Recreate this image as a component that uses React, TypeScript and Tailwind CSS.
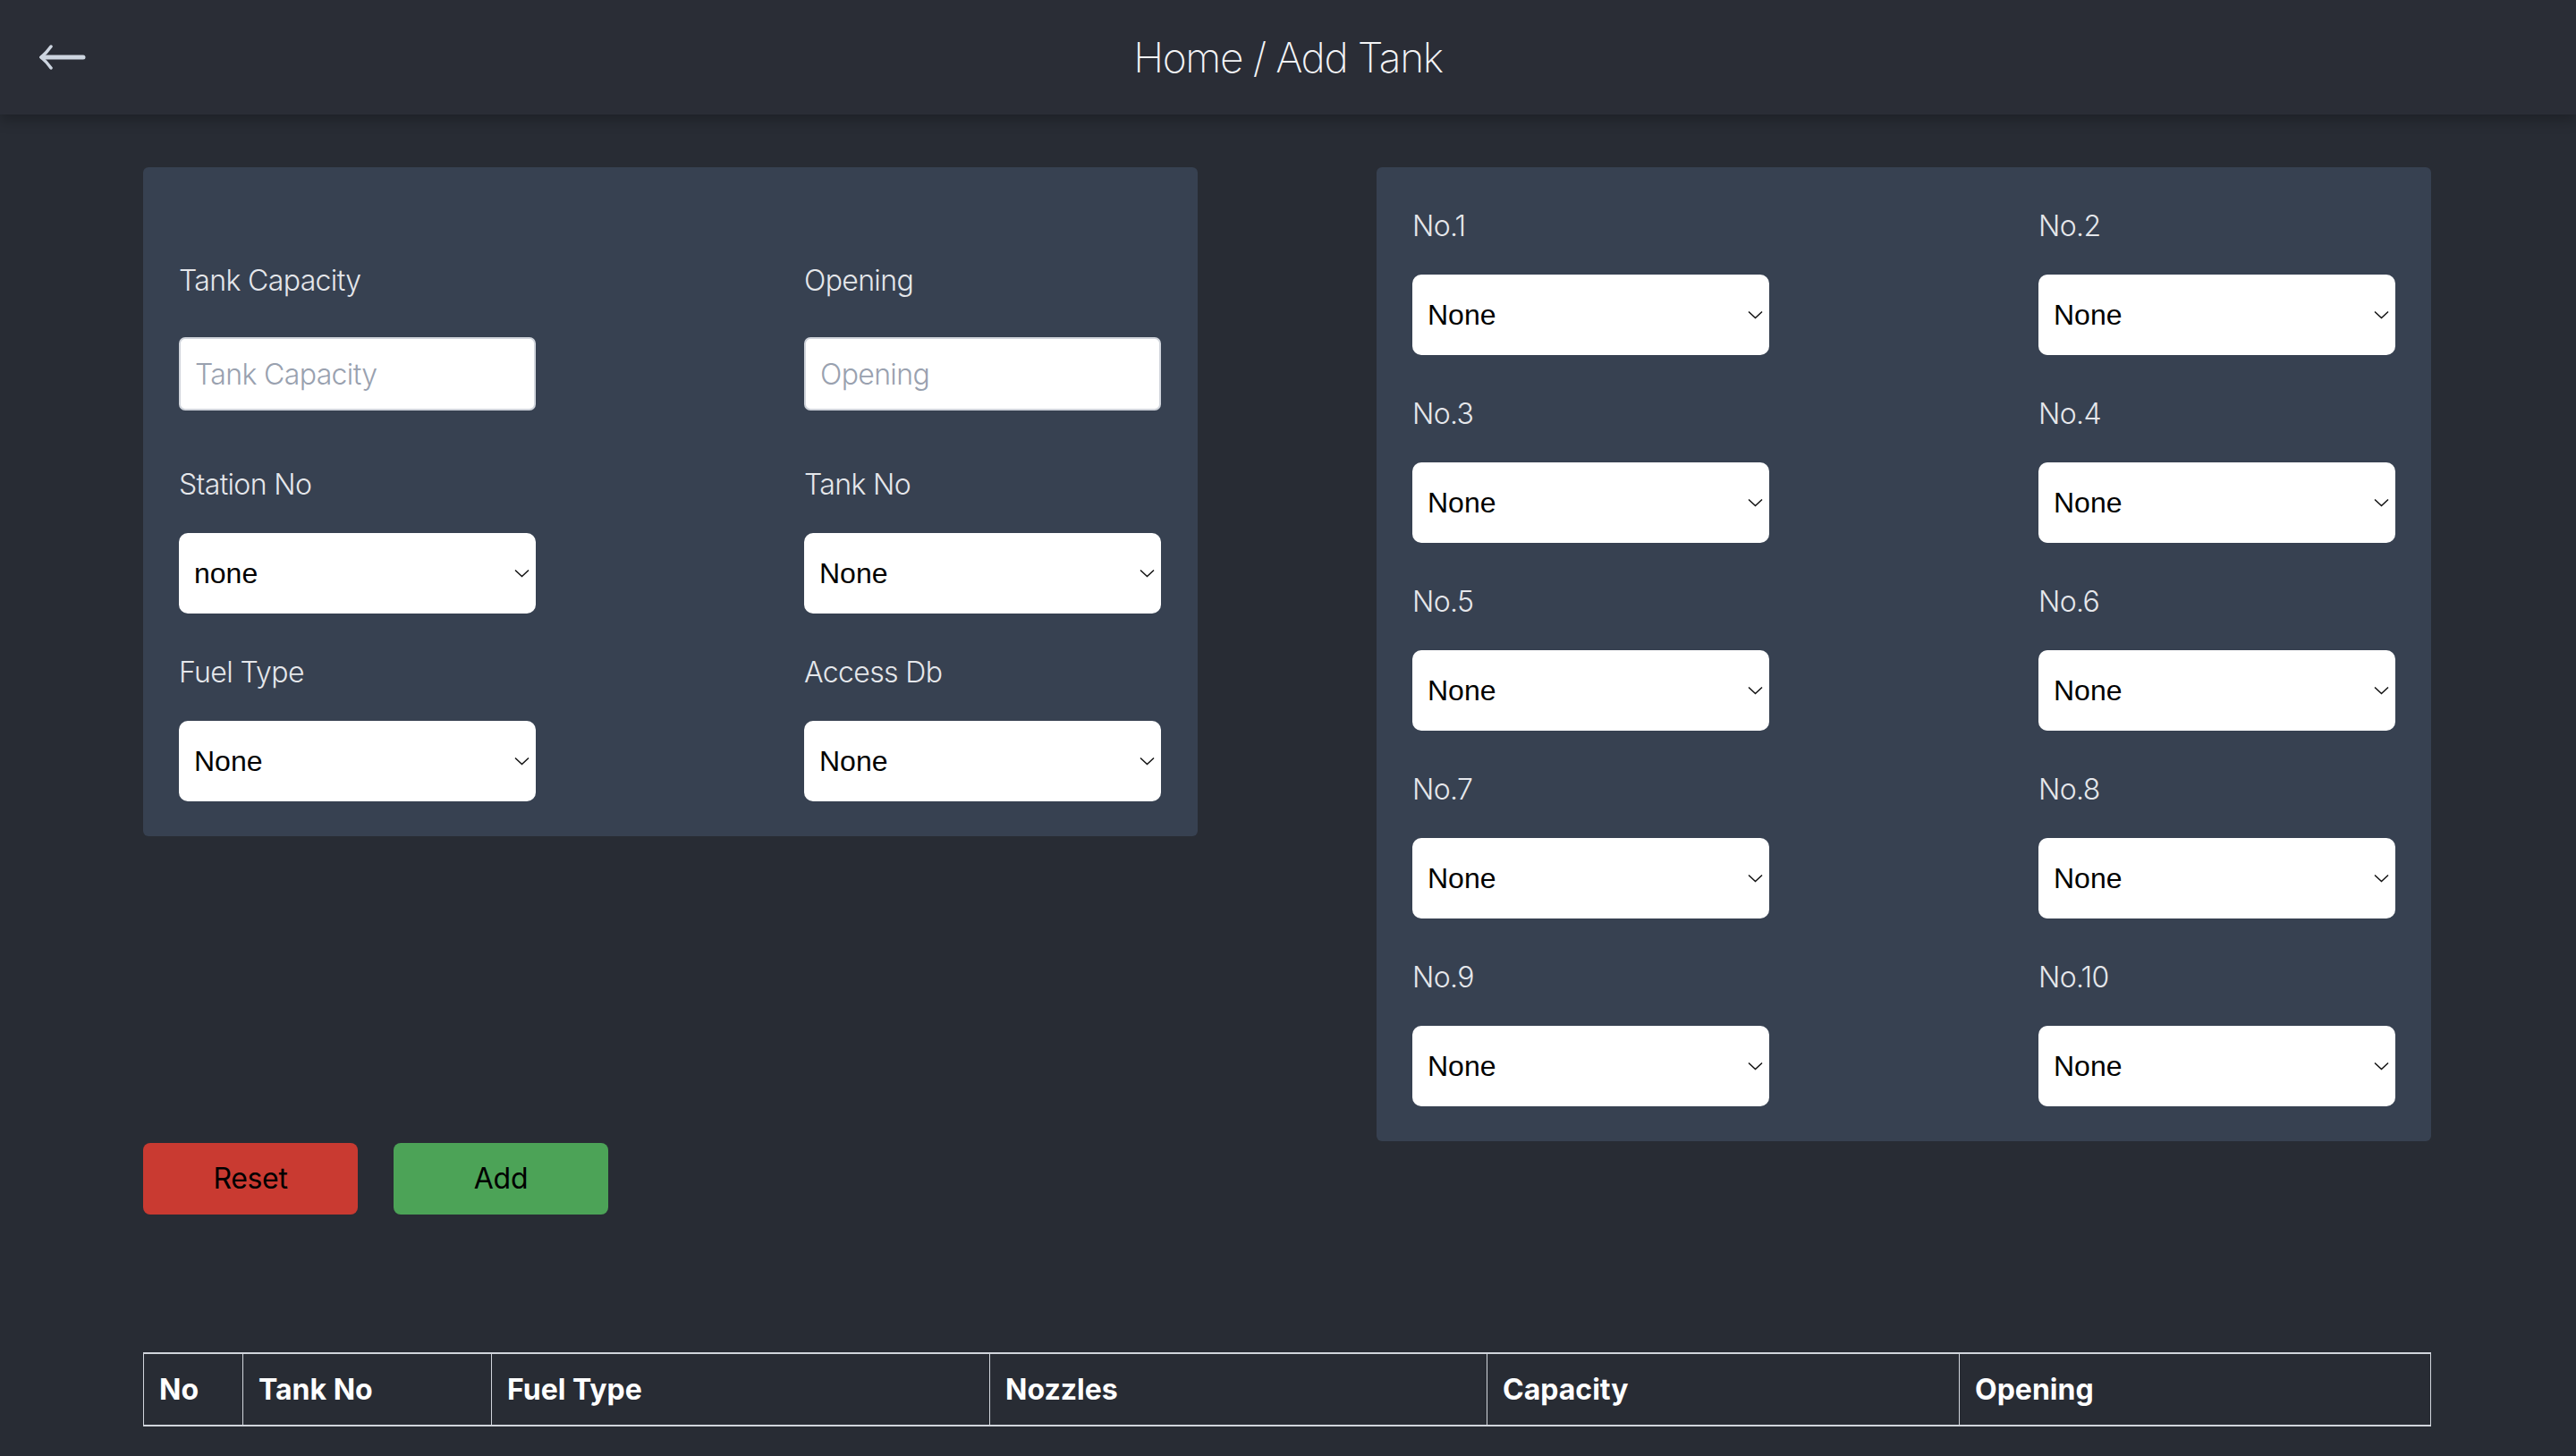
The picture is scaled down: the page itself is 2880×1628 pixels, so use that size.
import { useState } from "react";

const nozzleSlots = ["No.1", "No.2", "No.3", "No.4", "No.5", "No.6", "No.7", "No.8", "No.9", "No.10"];

function Chevron() {
    return (
        <svg
            className="pointer-events-none absolute right-[7px] top-1/2 -translate-y-1/2"
            width="17"
            height="10"
            viewBox="0 0 17 10"
            fill="none"
        >
            <path d="M1 1.5 L8.5 8.5 L16 1.5" stroke="#111" strokeWidth="1.5" />
        </svg>
    );
}

function SelectBox({
    value,
    options,
    onChange,
}: {
    value: string;
    options: string[];
    onChange: (v: string) => void;
}) {
    return (
        <div className="relative w-[399px] h-[90px]">
            <select
                value={value}
                onChange={(e) => onChange(e.target.value)}
                className="w-full h-full appearance-none rounded-[10px] bg-white pl-[17px] pr-10 text-[32px] text-black font-['Liberation_Sans',Arial,sans-serif] outline-none"
            >
                {options.map((o) => (
                    <option key={o} value={o}>
                        {o}
                    </option>
                ))}
            </select>
            <Chevron />
        </div>
    );
}

function Label({ children, className = "" }: { children: React.ReactNode; className?: string }) {
    return (
        <label className={"block h-[48px] text-[32px] leading-[48px] font-light tracking-[-0.02em] text-gray-200 " + className}>
            {children}
        </label>
    );
}

export default function App() {
    const [form, setForm] = useState({
        capacity: "",
        opening: "",
        station: "none",
        tankNo: "None",
        fuelType: "None",
        accessDb: "None",
    });
    const [nozzles, setNozzles] = useState<string[]>(nozzleSlots.map(() => "None"));

    function reset() {
        setForm({
            capacity: "",
            opening: "",
            station: "none",
            tankNo: "None",
            fuelType: "None",
            accessDb: "None",
        });
        setNozzles(nozzleSlots.map(() => "None"));
    }

    const rows: number[][] = [
        [0, 1],
        [2, 3],
        [4, 5],
        [6, 7],
        [8, 9],
    ];

    return (
        <div className="min-h-screen bg-[#282c34] font-['Inter',sans-serif] pb-10">
            {/* header */}
            <header className="relative z-10 h-[128px] grid grid-cols-[1fr_auto_1fr] items-center bg-[#2a2d36] shadow-[0_6px_14px_rgba(0,0,0,0.25)]">
                <button className="ml-[44px] w-[52px] h-[30px] flex items-center">
                    <svg width="52" height="28" viewBox="0 0 52 28" fill="none">
                        <path d="M3 14 H49" stroke="#cdd5e0" strokeWidth="5" strokeLinecap="round" />
                        <path d="M13 2 Q8 9 2 14 Q8 19 13 26" stroke="#cdd5e0" strokeWidth="3.5" strokeLinecap="round" fill="none" />
                    </svg>
                </button>
                <h1 className="text-[46px] font-extralight tracking-[-0.03em] text-gray-100 leading-none">Home / Add Tank</h1>
                <div />
            </header>

            <main className="pl-[160px] pr-[162px]">
                <div className="pt-[59px] flex items-start justify-between">
                    {/* tank details */}
                    <div className="w-[1179px] rounded-[6px] bg-[#374151] pt-[103px] px-10 pb-[39px] flex justify-between">
                        <div className="w-[400px]">
                            <Label className="mb-[39px]">Tank Capacity</Label>
                            <input
                                placeholder="Tank Capacity"
                                value={form.capacity}
                                onChange={(e) => setForm({ ...form, capacity: e.target.value })}
                                className="block w-[399px] h-[82px] mb-[59px] rounded-[7px] border-2 border-gray-300 bg-white px-4 text-[32px] font-light tracking-[-0.02em] text-black placeholder:text-gray-400 outline-none"
                            />
                            <Label className="mb-[30px]">Station No</Label>
                            <SelectBox
                                value={form.station}
                                options={["none", "1", "2", "3"]}
                                onChange={(v) => setForm({ ...form, station: v })}
                            />
                            <Label className="mt-[42px] mb-[30px]">Fuel Type</Label>
                            <SelectBox
                                value={form.fuelType}
                                options={["None", "Petrol 92", "Petrol 95", "Diesel"]}
                                onChange={(v) => setForm({ ...form, fuelType: v })}
                            />
                        </div>
                        <div className="w-[400px]">
                            <Label className="mb-[39px]">Opening</Label>
                            <input
                                placeholder="Opening"
                                value={form.opening}
                                onChange={(e) => setForm({ ...form, opening: e.target.value })}
                                className="block w-[399px] h-[82px] mb-[59px] rounded-[7px] border-2 border-gray-300 bg-white px-4 text-[32px] font-light tracking-[-0.02em] text-black placeholder:text-gray-400 outline-none"
                            />
                            <Label className="mb-[30px]">Tank No</Label>
                            <SelectBox
                                value={form.tankNo}
                                options={["None", "1", "2", "3", "4"]}
                                onChange={(v) => setForm({ ...form, tankNo: v })}
                            />
                            <Label className="mt-[42px] mb-[30px]">Access Db</Label>
                            <SelectBox
                                value={form.accessDb}
                                options={["None", "Yes", "No"]}
                                onChange={(v) => setForm({ ...form, accessDb: v })}
                            />
                        </div>
                    </div>

                    {/* nozzles */}
                    <div className="w-[1179px] rounded-[6px] bg-[#374151] pt-[42px] px-10 pb-[39px] flex flex-col gap-[42px]">
                        {rows.map((pair) => (
                            <div key={pair[0]} className="flex justify-between">
                                {pair.map((i) => (
                                    <div key={i} className="w-[399px]">
                                        <Label className="mb-[30px]">{nozzleSlots[i]}</Label>
                                        <SelectBox
                                            value={nozzles[i]}
                                            options={["None", "Nozzle 1", "Nozzle 2", "Nozzle 3"]}
                                            onChange={(v) => {
                                                const next = [...nozzles];
                                                next[i] = v;
                                                setNozzles(next);
                                            }}
                                        />
                                    </div>
                                ))}
                            </div>
                        ))}
                    </div>
                </div>

                <div className="mt-[2px] flex gap-10">
                    <button
                        onClick={reset}
                        className="w-[240px] h-[80px] rounded-[8px] bg-[#c93a31] text-[32px] tracking-[-0.01em] text-black"
                    >
                        Reset
                    </button>
                    <button className="w-[240px] h-[80px] rounded-[8px] bg-[#4ca357] text-[32px] tracking-[-0.01em] text-black">
                        Add
                    </button>
                </div>

                <table className="mt-[154px] w-full border-collapse text-left text-white">
                    <thead>
                        <tr className="h-[81px] border-y-2 border-gray-300">
                            <th className="w-[111px] border border-gray-300 px-[17px] text-[32px] font-bold">No</th>
                            <th className="w-[278px] border border-gray-300 px-[17px] text-[32px] font-bold">Tank No</th>
                            <th className="w-[557px] border border-gray-300 px-[17px] text-[32px] font-bold">Fuel Type</th>
                            <th className="w-[556px] border border-gray-300 px-[17px] text-[32px] font-bold">Nozzles</th>
                            <th className="w-[528px] border border-gray-300 px-[17px] text-[32px] font-bold">Capacity</th>
                            <th className="border border-gray-300 px-[17px] text-[32px] font-bold">Opening</th>
                        </tr>
                    </thead>
                    <tbody></tbody>
                </table>
            </main>
        </div>
    );
}
